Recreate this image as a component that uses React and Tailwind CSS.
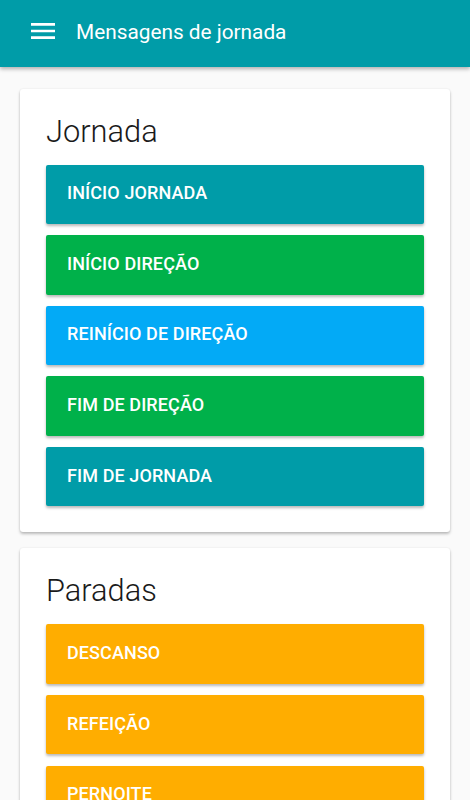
import React from "react";

const jornada = [
  { label: "INÍCIO JORNADA", color: "bg-[#009ca8]" },
  { label: "INÍCIO DIREÇÃO", color: "bg-[#00b14a]" },
  { label: "REINÍCIO DE DIREÇÃO", color: "bg-[#03aaf6]" },
  { label: "FIM DE DIREÇÃO", color: "bg-[#00b14a]" },
  { label: "FIM DE JORNADA", color: "bg-[#009ca8]" },
];

const paradas = [
  { label: "DESCANSO", color: "bg-[#ffad00]" },
  { label: "REFEIÇÃO", color: "bg-[#ffad00]" },
  { label: "PERNOITE", color: "bg-[#ffad00]" },
];

function Btn({ label, color }) {
  return (
    <button
      className={`${color} h-[59.5px] w-full rounded-[2px] pl-[21px] pb-[3px] text-left text-[18px] font-medium tracking-[0.1px] text-white shadow-[0_2px_3px_rgba(0,0,0,0.28)]`}
    >
      {label}
    </button>
  );
}

function Card({ title, items }) {
  return (
    <div className="rounded-[3px] bg-white px-[26px] pb-[26px] pt-[22px] shadow-[0_2px_3px_rgba(0,0,0,0.25),0_0_2px_rgba(0,0,0,0.08)]">
      <h2 className="mb-[15px] h-[39px] text-[30.8px] font-light leading-[41px] text-[#1a1a1a]">
        {title}
      </h2>
      <div className="flex flex-col gap-[11.1px]">
        {items.map((it) => (
          <Btn key={it.label} {...it} />
        ))}
      </div>
    </div>
  );
}

export default function App() {
  return (
    <div
      className="h-[800px] overflow-hidden bg-[#fafafa]"
      style={{ fontFamily: "Roboto, 'Noto Sans', sans-serif" }}
    >
      <header className="relative z-10 flex h-[67px] items-center bg-[#009ca8] shadow-[0_2px_4px_rgba(0,0,0,0.3)]">
        <div className="ml-[27px] -mt-[6px] h-[32px] w-[32px]">
          <svg viewBox="0 0 24 24" width="32" height="32" fill="white">
            <path d="M3 18h18v-2H3v2zm0-5h18v-2H3v2zm0-7v2h18V6H3z" />
          </svg>
        </div>
        <h1 className="ml-[17px] -mt-[1px] text-[20.8px] font-normal text-white">
          Mensagens de jornada
        </h1>
      </header>
      <main className="flex flex-col gap-[16px] px-[20px] pt-[21.5px]">
        <Card title="Jornada" items={jornada} />
        <Card title="Paradas" items={paradas} />
      </main>
    </div>
  );
}
